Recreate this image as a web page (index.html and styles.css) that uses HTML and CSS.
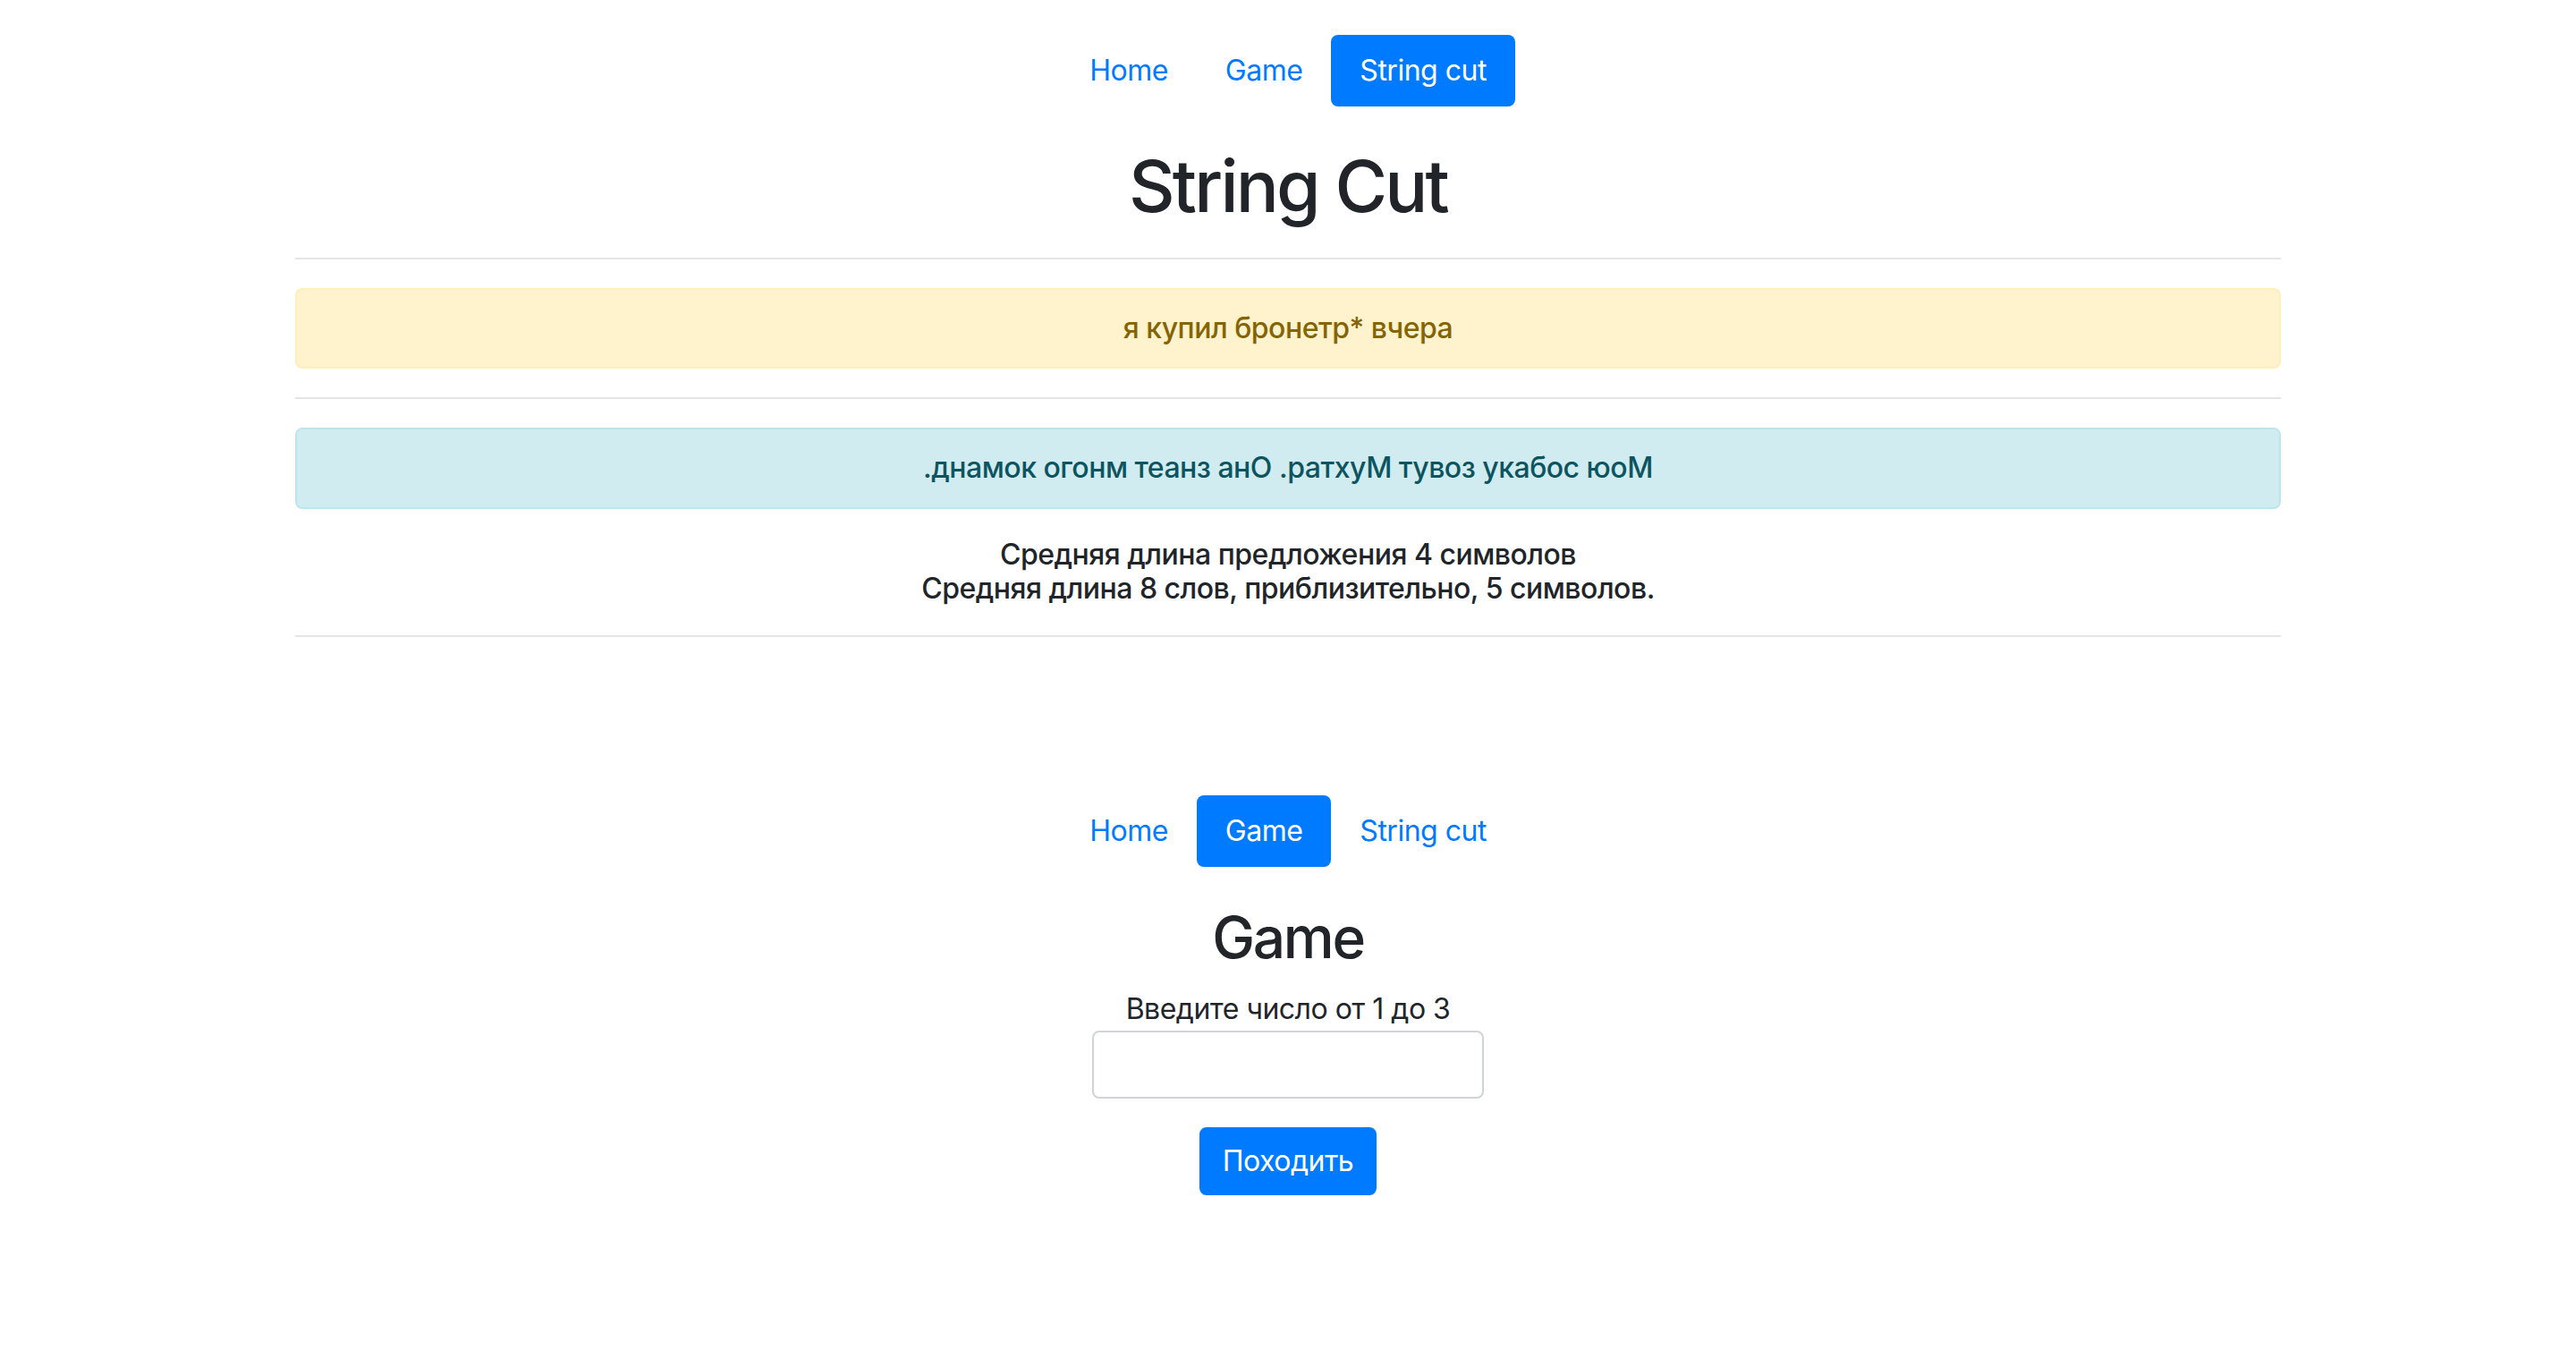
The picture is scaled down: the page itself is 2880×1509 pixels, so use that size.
FILE: index.html
```html
<!DOCTYPE html>
<html lang="ru">
<head>
<meta charset="utf-8">
<title>String Cut</title>
<link rel="stylesheet" href="styles.css">
</head>
<body>
<div class="app">
  <div class="container string-page">
    <ul class="nav">
      <li><a class="nav-link" href="#">Home</a></li>
      <li><a class="nav-link" href="#">Game</a></li>
      <li><a class="nav-link active" href="#">String cut</a></li>
    </ul>
    <h1 class="title">String Cut</h1>
    <hr class="divider">
    <div class="alert alert-warning"><h6 class="alert-text">я купил бронетр* вчера</h6></div>
    <hr class="divider">
    <div class="alert alert-info"><h6 class="alert-text">.днамок огонм теанз анО .ратхуМ тувоз укабос юоМ</h6></div>
    <h6 class="stats">Средняя длина предложения 4 символов<br>Средняя длина 8 слов, приблизительно, 5 символов.</h6>
    <hr class="divider">
  </div>
  <div class="container game-page">
    <ul class="nav">
      <li><a class="nav-link" href="#">Home</a></li>
      <li><a class="nav-link active" href="#">Game</a></li>
      <li><a class="nav-link" href="#">String cut</a></li>
    </ul>
    <h2 class="subtitle">Game</h2>
    <form class="game-form">
      <label class="field-label" for="num">Введите число от 1 до 3</label>
      <input id="num" class="form-control" type="text">
      <button class="btn" type="button">Походить</button>
    </form>
  </div>
</div>
</body>
</html>
```
FILE: styles.css
```css
* {
  box-sizing: border-box;
}

html, body {
  margin: 0;
  padding: 0;
  background: #fff;
}

body {
  font-family: Inter, "Noto Sans", "Liberation Sans", sans-serif;
  font-size: 32px;
  line-height: 1.5;
  letter-spacing: -0.5px;
  color: #212529;
}

.container {
  width: 100%;
  max-width: 2280px;
  margin: 0 auto;
  padding: 0 30px;
  text-align: center;
}

.string-page {
  padding-top: 39px;
}

.game-page {
  padding-top: 145px;
}

.nav {
  display: flex;
  justify-content: center;
  list-style: none;
  margin: 0 0 41px;
  padding: 0;
}

.nav-link {
  display: block;
  padding: 16px 32px;
  line-height: 48px;
  color: #007bff;
  text-decoration: none;
  border-radius: 8px;
}

.nav-link.active {
  background: #007bff;
  color: #fff;
}

.title {
  font-size: 80px;
  font-weight: 500;
  line-height: 1.2;
  letter-spacing: -0.035em;
  margin: 0 0 16px;
}

.subtitle {
  font-size: 64px;
  font-weight: 500;
  line-height: 1.2;
  letter-spacing: -0.035em;
  margin: 0 0 18px;
}

.divider {
  margin: 32px 0;
  border: 0;
  border-top: 2px solid rgba(0, 0, 0, 0.1);
  height: 0;
}

.alert {
  padding: 24px 40px;
  border: 2px solid transparent;
  border-radius: 8px;
  margin-bottom: 32px;
}

.alert-warning {
  background: #fff3cd;
  border-color: #ffeeba;
  color: #856404;
}

.alert-info {
  background: #d1ecf1;
  border-color: #bee5eb;
  color: #0c5460;
}

.alert-text,
.stats {
  font-size: 32px;
  font-weight: 500;
  line-height: 1.2;
  margin: 0;
}

.game-form {
  display: flex;
  flex-direction: column;
  align-items: center;
}

.field-label {
  display: block;
  line-height: 48px;
}

.form-control {
  display: block;
  width: 438px;
  height: 76px;
  padding: 12px 24px;
  margin: 0 0 32px;
  font-family: inherit;
  font-size: 32px;
  color: #495057;
  background: #fff;
  border: 2px solid #ced4da;
  border-radius: 8px;
}

.btn {
  display: inline-block;
  padding: 12px 24px;
  font-family: inherit;
  font-size: 32px;
  line-height: 48px;
  letter-spacing: -0.5px;
  color: #fff;
  background: #007bff;
  border: 2px solid #007bff;
  border-radius: 8px;
  cursor: pointer;
}
```
